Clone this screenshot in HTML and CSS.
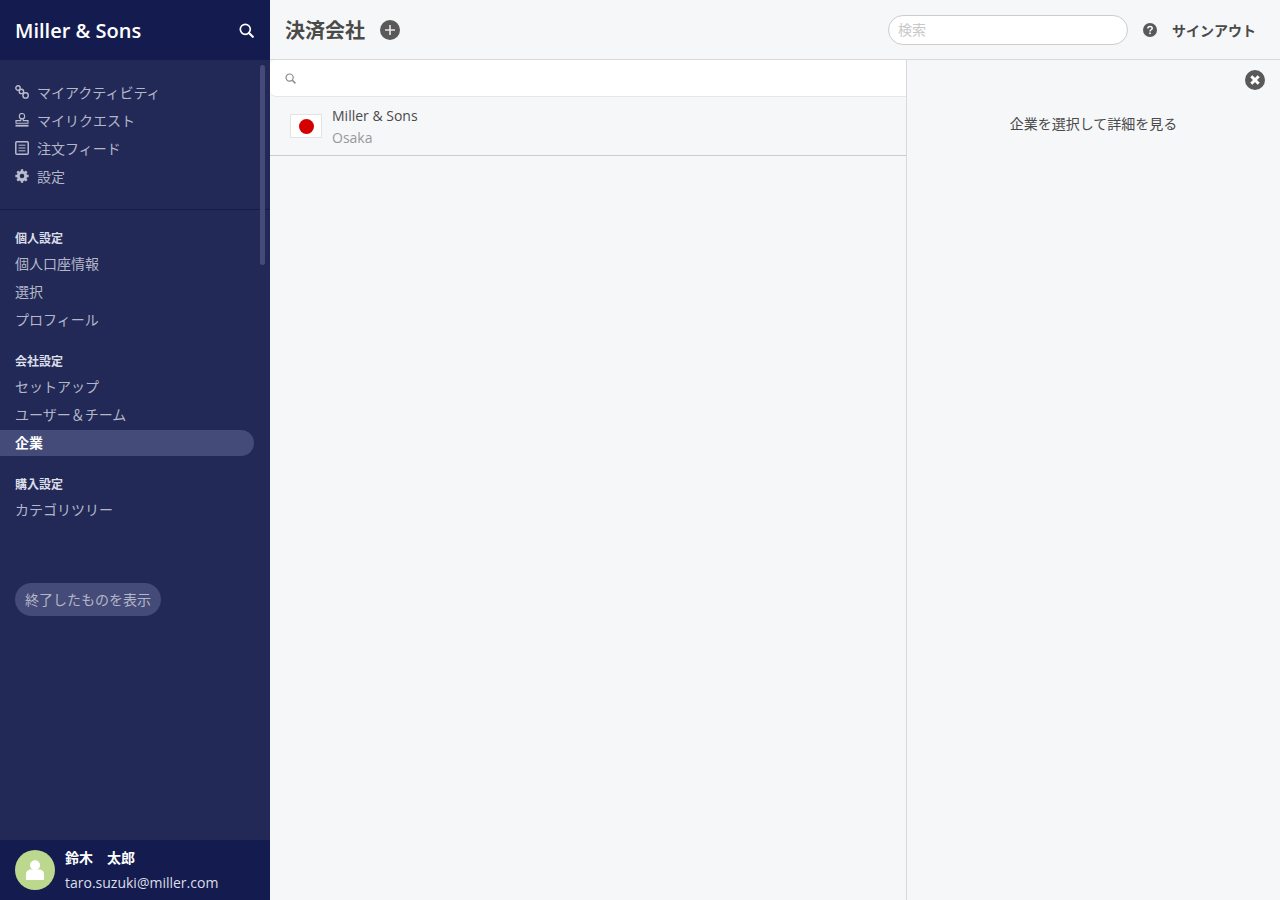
FILE: index.html
```html
<!doctype html>
<html lang="ja">
<head>
    <meta charset="utf-8">
    <title>決済会社</title>
    <link rel="stylesheet" href="styles.css">
</head>
<body>
    <div class="app">
        <aside class="sidebar">
            <div class="brand">
                <span class="brand-name">Miller &amp; Sons</span>
                <svg class="brand-search" width="15" height="15" viewBox="0 0 15 15"><circle cx="6.3" cy="6.3" r="5" fill="none" stroke="#fff" stroke-width="1.7"/><path d="M10 10 L13.8 13.8" stroke="#fff" stroke-width="2.2" stroke-linecap="round"/></svg>
            </div>
            <div class="side-scroll">
                <div class="scrollbar"></div>
                <nav class="main-nav">
                    <a class="icon-link">
                        <svg width="14" height="14" viewBox="0 0 14 14" fill="none" stroke="#b9bccd" stroke-width="1.4"><circle cx="3" cy="3" r="2.2"/><circle cx="6.4" cy="6.4" r="2.2"/><circle cx="10.6" cy="10.4" r="2.7"/></svg>
                        マイアクティビティ
                    </a>
                    <a class="icon-link">
                        <svg width="14" height="14" viewBox="0 0 14 14" fill="none" stroke="#b9bccd" stroke-width="1.1"><circle cx="7" cy="3.2" r="2.7"/><path d="M5.8 6 V7.6 H1 V10.2 H13 V7.6 H8.2 V6"/><rect x="0.5" y="11.8" width="13" height="1.8" fill="#b9bccd" stroke="none"/></svg>
                        マイリクエスト
                    </a>
                    <a class="icon-link">
                        <svg width="14" height="14" viewBox="0 0 14 14" fill="none" stroke="#b9bccd"><rect x="0.8" y="0.8" width="12.4" height="12.4" rx="1" stroke-width="1.5"/><path d="M3.5 4.2 H10.5 M3.5 7 H10.5 M3.5 9.8 H10.5" stroke-width="1"/></svg>
                        注文フィード
                    </a>
                    <a class="icon-link">
                        <svg width="14" height="14" viewBox="0 0 16 16"><circle cx="8" cy="8" r="4.4" fill="none" stroke="#b9bccd" stroke-width="3"/><path d="M8 0.4 V15.6 M0.4 8 H15.6 M2.6 2.6 L13.4 13.4 M13.4 2.6 L2.6 13.4" stroke="#b9bccd" stroke-width="2.8"/><circle cx="8" cy="8" r="2.6" fill="#222957"/></svg>
                        設定
                    </a>
                </nav>
                <div class="settings">
                    <section class="group">
                        <h4>個人設定</h4>
                        <a>個人口座情報</a>
                        <a>選択</a>
                        <a>プロフィール</a>
                    </section>
                    <section class="group">
                        <h4>会社設定</h4>
                        <a>セットアップ</a>
                        <a>ユーザー＆チーム</a>
                        <a class="active">企業</a>
                    </section>
                    <section class="group">
                        <h4>購入設定</h4>
                        <a>カテゴリツリー</a>
                    </section>
                    <button class="show-ended">終了したものを表示</button>
                </div>
            </div>
            <div class="user">
                <div class="avatar">
                    <svg width="18" height="20" viewBox="0 0 18 20" fill="#fff"><circle cx="9" cy="5.2" r="5"/><path d="M0 20 V14 C0 11 2.4 9.4 5 9.4 H13 C15.6 9.4 18 11 18 14 V20 Z"/></svg>
                </div>
                <div class="user-text">
                    <div class="user-name">鈴木　太郎</div>
                    <div class="user-mail">taro.suzuki@miller.com</div>
                </div>
            </div>
        </aside>
        <main class="content">
            <header class="topbar">
                <h1>決済会社</h1>
                <span class="round-btn add">
                    <svg width="20" height="20" viewBox="0 0 20 20"><circle cx="10" cy="10" r="10" fill="#595959"/><path d="M10 5 V15 M5 10 H15" stroke="#e8e8e8" stroke-width="1.6"/></svg>
                </span>
                <input class="top-search" type="text" placeholder="検索">
                <svg class="help" width="14" height="14" viewBox="0 0 14 14"><circle cx="7" cy="7" r="7" fill="#595959"/><path d="M4.9 5.4 C4.9 2.7 9.2 2.8 9.2 5.2 C9.2 6.8 7 6.7 7 8.4" fill="none" stroke="#fff" stroke-width="1.5"/><rect x="6.2" y="9.5" width="1.6" height="1.6" fill="#fff"/></svg>
                <a class="signout">サインアウト</a>
            </header>
            <div class="panes">
                <section class="list-pane">
                    <div class="list-search">
                        <svg width="11" height="11" viewBox="0 0 11 11" fill="none" stroke="#8a8a8a" stroke-width="1.2"><circle cx="4.6" cy="4.6" r="3.6"/><path d="M7.3 7.3 L10.4 10.4" stroke-width="1.5"/></svg>
                    </div>
                    <div class="company-row">
                        <span class="flag"><span class="flag-sun"></span></span>
                        <div class="company-text">
                            <div class="company-name">Miller &amp; Sons</div>
                            <div class="company-city">Osaka</div>
                        </div>
                    </div>
                </section>
                <section class="detail-pane">
                    <svg class="close" width="20" height="20" viewBox="0 0 20 20"><circle cx="10" cy="10" r="10" fill="#595959"/><path d="M6.3 6.3 L13.7 13.7 M13.7 6.3 L6.3 13.7" stroke="#fff" stroke-width="3"/></svg>
                    <p>企業を選択して詳細を見る</p>
                </section>
            </div>
        </main>
    </div>
</body>
</html>
```

FILE: styles.css
```css
* {
    box-sizing: border-box;
}
html, body {
    height: 100%;
}
body {
    margin: 0;
    background-color: #f6f7f9;
    color: #333;
    font-family: "Open Sans", "Noto Sans CJK JP", sans-serif;
    font-size: 14px;
    overflow: hidden;
}
.app {
    display: flex;
    height: 100vh;
}

/* Sidebar */
.sidebar {
    width: 270px;
    flex-shrink: 0;
    display: flex;
    flex-direction: column;
    background-color: #222957;
    color: #b4b7ca;
}
.brand {
    height: 60px;
    flex-shrink: 0;
    display: flex;
    align-items: center;
    justify-content: space-between;
    padding: 0 16px 0 15px;
    background-color: #141c4f;
    color: #fff;
}
.brand-name {
    font-size: 20px;
    font-weight: 600;
}
.side-scroll {
    flex: 1;
    position: relative;
}
.scrollbar {
    position: absolute;
    top: 5px;
    right: 5px;
    width: 5px;
    height: 200px;
    border-radius: 3px;
    background-color: #454b78;
}
.main-nav {
    padding: 18px 0 19px 15px;
    border-bottom: 1px solid #141c4f;
}
.icon-link {
    display: flex;
    align-items: center;
    gap: 8px;
    height: 28px;
    padding-bottom: 1px;
}
.icon-link svg {
    margin-top: 1px;
}
.settings {
    padding: 21px 16px 0 0;
}
.group {
    margin-bottom: 21px;
}
.group h4 {
    margin: 0 0 4px;
    padding-left: 15px;
    height: 16px;
    line-height: 16px;
    font-size: 12px;
    font-weight: 700;
    color: #dcdee8;
}
.group a {
    display: flex;
    align-items: center;
    height: 26px;
    margin-bottom: 2px;
    padding: 0 0 2px 15px;
    border-radius: 0 13px 13px 0;
}
.group a.active {
    background-color: #454b78;
    color: #fff;
    font-weight: 700;
}
.show-ended {
    display: block;
    margin: 60px 0 0 15px;
    height: 33px;
    padding: 0 10px 2px;
    border: none;
    border-radius: 17px;
    background-color: #454b78;
    color: #b4b7ca;
    font-family: inherit;
    font-size: 14px;
}
.user {
    height: 60px;
    flex-shrink: 0;
    display: flex;
    align-items: center;
    gap: 10px;
    padding: 0 15px;
    background-color: #141c4f;
}
.avatar {
    width: 40px;
    height: 40px;
    border-radius: 50%;
    background-color: #bcd88e;
    display: flex;
    align-items: center;
    justify-content: center;
}
.user-name {
    color: #fff;
    font-weight: 700;
    line-height: 22px;
    margin-bottom: 3px;
}
.user-mail {
    color: #dcdee8;
    line-height: 22px;
}

/* Main area */
.content {
    flex: 1;
    display: flex;
    flex-direction: column;
    min-width: 0;
}
.topbar {
    height: 60px;
    flex-shrink: 0;
    display: flex;
    align-items: center;
    padding: 0 24px 0 15px;
    border-bottom: 1px solid #d9d9d9;
}
.topbar h1 {
    margin: 0;
    font-size: 20px;
    font-weight: 700;
    color: #4a4a4a;
}
.round-btn {
    display: flex;
    margin-left: 15px;
}
.top-search {
    margin-left: auto;
    width: 240px;
    height: 30px;
    padding: 0 9px;
    border: 1px solid #ccc;
    border-radius: 15px;
    background-color: #fff;
    font-family: inherit;
    font-size: 14px;
}
.top-search::placeholder {
    color: #c8c8c8;
}
.help {
    margin-left: 15px;
}
.signout {
    margin-left: 15px;
    font-weight: 700;
    color: #4a4a4a;
}
.panes {
    flex: 1;
    display: flex;
    min-height: 0;
}
.list-pane {
    width: 637px;
    flex-shrink: 0;
    border-right: 1px solid #d9d9d9;
}
.list-search {
    height: 37px;
    display: flex;
    align-items: center;
    padding-left: 15px;
    background-color: #fff;
    border-bottom: 1px solid #e6e6e6;
    border-radius: 6px 0 0 6px;
}
.company-row {
    height: 59px;
    display: flex;
    align-items: center;
    gap: 10px;
    padding-left: 20px;
    border-bottom: 1px solid #ccc;
}
.company-text {
    padding-top: 2px;
}
.flag {
    width: 32px;
    height: 24px;
    display: flex;
    align-items: center;
    justify-content: center;
    background-color: #fff;
    border: 1px solid #e3e3e3;
}
.flag-sun {
    width: 15px;
    height: 15px;
    border-radius: 50%;
    background-color: #d40000;
}
.company-name {
    line-height: 22px;
    color: #4a4a4a;
}
.company-city {
    line-height: 22px;
    color: #999;
}
.detail-pane {
    flex: 1;
    position: relative;
    text-align: center;
}
.detail-pane p {
    margin: 53px 0 0;
    line-height: 22px;
    color: #4a4a4a;
}
.close {
    position: absolute;
    top: 10px;
    right: 15px;
}
```
